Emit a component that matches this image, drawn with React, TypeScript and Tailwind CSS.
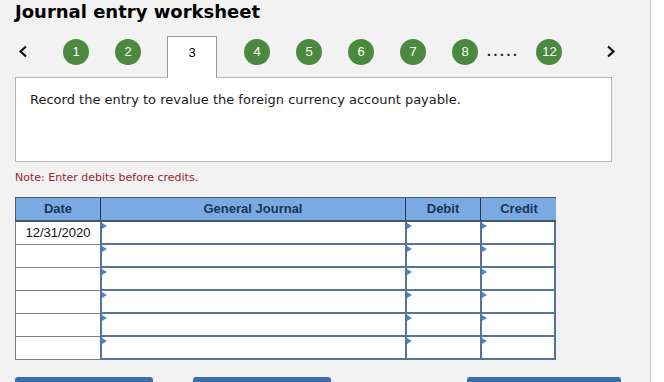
import { ReactNode } from 'react';

const STEPS_RIGHT = ['4', '5', '6', '7', '8'];
const ROWS = ['12/31/2020', '', '', '', '', ''];

function StepDot({ label, className = '' }: { label: string; className?: string }) {
  return (
    <div
      className={`mt-[3px] flex h-[26px] w-[26px] shrink-0 items-center justify-center rounded-full bg-[#4b8a3e] text-[13px] text-white ${className}`}
    >
      {label}
    </div>
  );
}

function Marker() {
  return (
    <span className="absolute left-0 top-[1px] h-0 w-0 border-y-[3px] border-l-[5px] border-y-transparent border-l-[#4a86c8]" />
  );
}

function InputCell({ last = false }: { last?: boolean }) {
  return (
    <div
      className={`relative h-[23px] border-b-2 border-l-2 border-[#58739a] bg-white ${last ? 'border-r-2' : ''}`}
    >
      <Marker />
    </div>
  );
}

function HeadCell({ children, className = '' }: { children: ReactNode; className?: string }) {
  return (
    <div
      className={`flex h-[22px] items-center justify-center border-r border-[#26384d] text-[13px] font-bold text-[#1d3553] ${className}`}
    >
      {children}
    </div>
  );
}

export default function App() {
  return (
    <div className="flex h-[382px] w-[664px] overflow-hidden bg-white font-['Liberation_Sans',Arial,sans-serif]">
      <div className="h-full w-[651px] shrink-0 border-r border-[#c4c4c4] bg-[#f2f2f2] pl-[15px]">
        <h1 className="h-[36px] pt-[1px] font-['DejaVu_Sans',Verdana,sans-serif] text-[18px] font-bold leading-[22px] text-black">
          Journal entry worksheet
        </h1>

        <div className="flex h-[41px] items-start">
          <svg className="ml-[3px] mt-[9px]" width="11" height="13" viewBox="0 0 11 13">
            <polyline points="8,1.5 2.5,6.5 8,11.5" fill="none" stroke="#111" strokeWidth="2.2" />
          </svg>
          <StepDot label="1" className="ml-[34px]" />
          <StepDot label="2" className="ml-[26px]" />
          <div className="relative z-10 ml-[26px] h-[42px] w-[50px] shrink-0 border border-b-0 border-[#9a9a9a] bg-white pt-[8px] text-center text-[13px] leading-[16px] text-black">
            3
          </div>
          {STEPS_RIGHT.map((s, i) => (
            <StepDot key={s} label={s} className={i === 0 ? 'ml-[27px]' : 'ml-[26px]'} />
          ))}
          <div className="ml-[9px] mt-[7px] text-[14px] font-bold leading-[16px] tracking-[2.6px] text-[#222]">.....</div>
          <StepDot label="12" className="ml-[17px]" />
          <svg className="ml-[43px] mt-[9px]" width="11" height="13" viewBox="0 0 11 13">
            <polyline points="3,1.5 8.5,6.5 3,11.5" fill="none" stroke="#111" strokeWidth="2.2" />
          </svg>
        </div>

        <div className="h-[85px] w-[597px] border border-[#b4b4b4] bg-white px-[14px] pt-[14px] font-['DejaVu_Sans',Verdana,sans-serif] text-[13px] leading-[16px] text-[#1a1a1a]">
          Record the entry to revalue the foreign currency account payable.
        </div>

        <p className="mt-[9px] h-[26px] font-['DejaVu_Sans',Verdana,sans-serif] text-[11px] leading-[14px] text-[#a01c2c]">
          Note: Enter debits before credits.
        </p>

        <div className="w-[541px]">
          <div className="grid grid-cols-[85px_305px_75px_76px] border-b-2 border-l border-t border-[#4a5a6c] bg-[#79abe2]">
            <HeadCell>Date</HeadCell>
            <HeadCell>General Journal</HeadCell>
            <HeadCell>Debit</HeadCell>
            <HeadCell className="border-r-0">Credit</HeadCell>
          </div>
          {ROWS.map((date, i) => (
            <div key={i} className="grid grid-cols-[85px_305px_75px_76px]">
              <div className="h-[23px] border-b border-l border-[#808080] bg-white text-center text-[13px] leading-[22px] text-[#111]">
                {date}
              </div>
              <InputCell />
              <InputCell />
              <InputCell last />
            </div>
          ))}
        </div>

        <div className="mt-[17px] flex">
          <div className="h-[8px] w-[138px] rounded-t-[3px] bg-[#3a6dab]" />
          <div className="ml-[40px] h-[8px] w-[138px] rounded-t-[3px] bg-[#3a6dab]" />
          <div className="ml-[136px] h-[8px] w-[154px] rounded-t-[3px] bg-[#3a6dab]" />
        </div>
      </div>
    </div>
  );
}
